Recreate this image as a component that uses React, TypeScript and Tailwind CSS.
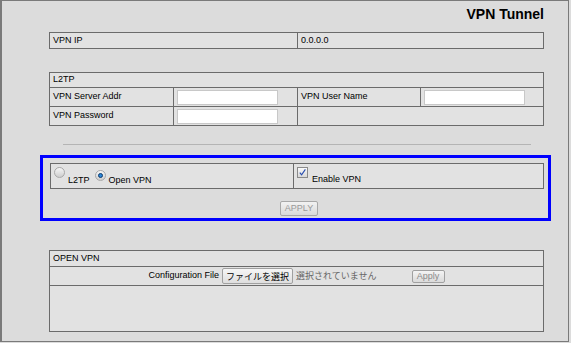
import React from 'react';

const cell = 'border border-[#6b6b6b] bg-[#e2e2e2] px-[3px] text-left align-middle';

const TextBox: React.FC = () => (
  <div className="h-[15px] w-[101px] border border-[#c8c8c8] bg-white" />
);

const Radio: React.FC<{ checked?: boolean }> = ({ checked }) => (
  <span className="relative inline-flex h-[11px] w-[11px] items-center justify-center rounded-full border border-[#a8a8a8] bg-gradient-to-b from-[#f6f6f6] to-[#cdcdcd]">
    {checked && <span className="h-[5px] w-[5px] rounded-full border border-[#123d6e] bg-[#2a86d8]" />}
  </span>
);

const CheckBox: React.FC = () => (
  <span className="inline-flex h-[11px] w-[11px] items-center justify-center border border-[#8a8a8a] bg-gradient-to-b from-[#fafafa] to-[#d8d8d8]">
    <svg viewBox="0 0 10 10" className="h-[9px] w-[9px]" fill="none" stroke="#2a4fb0" strokeWidth="1.3">
      <path d="M2 5.2 L4 7.6 L8.2 1.6" />
    </svg>
  </span>
);

export default function App() {
  return (
    <div className="h-[343px] w-[571px] bg-[#dcdcdc] font-['Liberation_Sans',Arial,sans-serif] text-[9px] text-black">
      <div className="h-[342px] w-[569px] border-t border-r border-b border-l-2 border-[#7a7a7a] bg-[#dcdcdc]">
        <div className="pt-[5px] pr-[24px] text-right text-[14px] leading-[17px] font-bold">VPN Tunnel</div>

        {/* VPN IP */}
        <table className="mt-[9px] ml-[47px] w-[495px] border-collapse">
          <tbody>
            <tr className="h-[16px]">
              <td className={`${cell} w-[248px]`}>VPN IP</td>
              <td className={cell}>0.0.0.0</td>
            </tr>
          </tbody>
        </table>

        {/* L2TP */}
        <table className="mt-[23px] ml-[47px] w-[495px] border-collapse">
          <tbody>
            <tr className="h-[15px]">
              <td className={cell} colSpan={4}>L2TP</td>
            </tr>
            <tr className="h-[19px]">
              <td className={`${cell} w-[124px]`}>VPN Server Addr</td>
              <td className={`${cell} w-[124px]`}><TextBox /></td>
              <td className={`${cell} w-[123px]`}>VPN User Name</td>
              <td className={cell}><TextBox /></td>
            </tr>
            <tr className="h-[19px]">
              <td className={cell}>VPN Password</td>
              <td className={cell}><TextBox /></td>
              <td className={cell} colSpan={2}></td>
            </tr>
          </tbody>
        </table>

        <div className="mt-[18px] ml-[61px] h-px w-[468px] bg-[#b4b4b4]" />

        {/* highlighted mode selection */}
        <div className="mt-[10px] ml-[38px] h-[66px] w-[511px] border-[3px] border-[#0000ff] pt-[5px] pl-[7px]">
          <table className="w-[494px] border-collapse">
            <tbody>
              <tr className="h-[25px]">
                <td className={`${cell} w-[243px]`}>
                  <div className="flex items-end gap-[3px] pt-[2px]">
                    <span className="mb-[5px]"><Radio /></span>
                    <span className="mr-[2px]">L2TP</span>
                    <span className="mb-[5px]"><Radio checked /></span>
                    <span>Open VPN</span>
                  </div>
                </td>
                <td className={cell}>
                  <div className="flex items-end gap-[4px] pt-[2px]">
                    <span className="mb-[5px]"><CheckBox /></span>
                    <span>Enable VPN</span>
                  </div>
                </td>
              </tr>
            </tbody>
          </table>
          <div className="mt-[12px] flex justify-center">
            <button className="h-[15px] w-[38px] rounded-[2px] border border-[#a8a8a8] bg-gradient-to-b from-[#f2f2f2] to-[#dadada] text-[9px] leading-[13px] text-[#9a9a9a]">
              APPLY
            </button>
          </div>
        </div>

        {/* OPEN VPN */}
        <table className="mt-[29px] ml-[47px] w-[495px] border-collapse">
          <tbody>
            <tr className="h-[16px]">
              <td className={cell}>OPEN VPN</td>
            </tr>
            <tr className="h-[19px]">
              <td className={`${cell} text-center`}>
                <div className="flex items-center justify-center">
                  <span className="mr-[3px]">Configuration File</span>
                  <span className="inline-flex h-[16px] items-center rounded-[2px] border border-[#a0a0a0] bg-gradient-to-b from-[#f6f6f6] to-[#dedede] px-[3px] font-['Noto_Sans_CJK_JP',sans-serif] text-[9px] leading-none">
                    ファイルを選択
                  </span>
                  <span className="ml-[3px] font-['Noto_Sans_CJK_JP',sans-serif] text-[9px] text-[#666]">選択されていません</span>
                  <button className="ml-[35px] h-[13px] w-[33px] rounded-[2px] border border-[#a0a0a0] bg-gradient-to-b from-[#f4f4f4] to-[#dadada] text-[9px] leading-[11px] text-[#8a8a8a]">
                    Apply
                  </button>
                </div>
              </td>
            </tr>
            <tr className="h-[46px]">
              <td className={cell}></td>
            </tr>
          </tbody>
        </table>
      </div>
    </div>
  );
}
